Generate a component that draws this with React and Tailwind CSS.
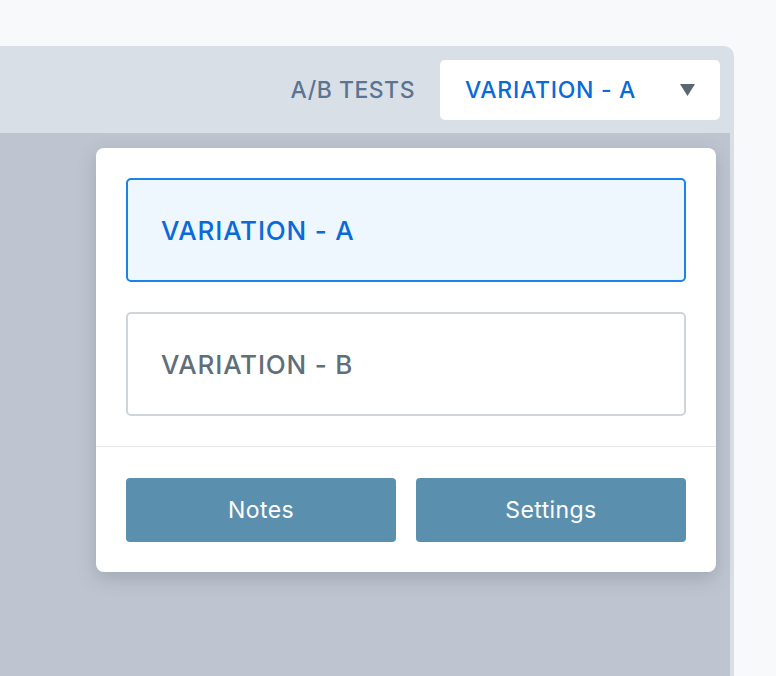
import { useState } from 'react';

const font = { fontFamily: 'Inter, "Noto Sans", sans-serif' };

export default function App() {
  const [selected, setSelected] = useState('A');

  return (
    <div className="min-h-screen bg-[#f8f9fb] pt-[46px]" style={font}>
      <div className="w-[734px] h-[630px] bg-[#d9dfe6] rounded-tr-[10px] flex flex-col">
        <div className="h-[87px] flex items-center justify-end pr-[14px]">
          <span className="text-[23px] font-medium tracking-[0.5px] text-[#5b7491] mr-[25px] pt-[2px]">A/B TESTS</span>
          <button className="w-[280px] h-[60px] bg-white rounded-[5px] flex items-center justify-between pl-[25px] pr-[25px]">
            <span className="text-[23px] font-medium tracking-[0.7px] text-[#0a6ad8] pt-[2px]">VARIATION - {selected}</span>
            <svg width="15" height="12" viewBox="0 0 15 12">
              <polygon points="0,0 15,0 7.5,12" fill="#5a6672" />
            </svg>
          </button>
        </div>

        <div className="flex-1 bg-[#bec5d0] mr-[4px] relative">
          <div className="absolute left-[96px] top-[15px] w-[620px] bg-white rounded-[8px] shadow-[0_6px_18px_rgba(70,80,100,0.25)]">
            <div className="px-[30px] pt-[30px] pb-[30px] flex flex-col gap-[30px]">
              {['A', 'B'].map((v) => (
                <button
                  key={v}
                  onClick={() => setSelected(v)}
                  className={
                    v === selected
                      ? 'h-[104px] rounded-[5px] border-2 border-[#1a82e8] bg-[#eef6fe] text-left pl-[33px] text-[26px] font-medium tracking-[0.8px] text-[#0a6ad8]'
                      : 'h-[104px] rounded-[5px] border-2 border-[#d0d5da] bg-white text-left pl-[33px] text-[26px] font-medium tracking-[0.8px] text-[#5f6f7a]'
                  }
                >
                  VARIATION - {v}
                </button>
              ))}
            </div>
            <div className="border-t border-[#e5e8ec] px-[30px] pt-[31px] pb-[30px] flex gap-[20px]">
              <button className="flex-1 h-[64px] rounded-[4px] bg-[#5b8fae] text-white text-[23px] tracking-[0.4px]">Notes</button>
              <button className="flex-1 h-[64px] rounded-[4px] bg-[#5b8fae] text-white text-[23px] tracking-[0.4px]">Settings</button>
            </div>
          </div>
        </div>
      </div>
    </div>
  );
}
